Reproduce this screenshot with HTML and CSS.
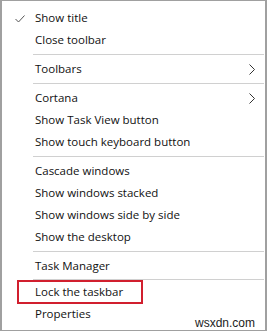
FILE: index.html
```html
<!DOCTYPE html>
<html>
<head>
<meta charset="utf-8">
<link rel="stylesheet" href="styles.css">
</head>
<body>
<div class="menu">
  <div class="item"><svg class="check" width="10" height="8" viewBox="0 0 10 8"><path d="M0.5 4 L3.5 7 L9.5 0.5" fill="none" stroke="#555" stroke-width="1"/></svg>Show title</div>
  <div class="item">Close toolbar</div>
  <div class="sep"></div>
  <div class="item">Toolbars<svg class="chev" width="6" height="11" viewBox="0 0 6 11"><path d="M0.5 0.5 L5.5 5.5 L0.5 10.5" fill="none" stroke="#333" stroke-width="1"/></svg></div>
  <div class="sep"></div>
  <div class="item">Cortana<svg class="chev" width="6" height="11" viewBox="0 0 6 11"><path d="M0.5 0.5 L5.5 5.5 L0.5 10.5" fill="none" stroke="#333" stroke-width="1"/></svg></div>
  <div class="item">Show Task View button</div>
  <div class="item">Show touch keyboard button</div>
  <div class="sep"></div>
  <div class="item">Cascade windows</div>
  <div class="item">Show windows stacked</div>
  <div class="item">Show windows side by side</div>
  <div class="item">Show the desktop</div>
  <div class="sep"></div>
  <div class="item">Task Manager</div>
  <div class="sep sep-tight"></div>
  <div class="item highlight">Lock the taskbar</div>
  <div class="item">Properties</div>
  <div class="watermark">wsxdn.com</div>
</div>
</body>
</html>
```
FILE: styles.css
```css
html, body {
  margin: 0;
  padding: 0;
  background: #fff;
}
.menu {
  position: relative;
  width: 267px;
  height: 331px;
  box-sizing: border-box;
  border: 1px solid #a0a0a0;
  border-right-width: 2px;
  border-left-width: 2px;
  padding-top: 6px;
  font-family: "Open Sans", "Noto Sans", sans-serif;
  font-size: 11.5px;
  color: #111;
  background: #fff;
}
.item {
  position: relative;
  height: 22px;
  line-height: 22px;
  padding-left: 33px;
  display: flex;
  align-items: center;
}
.check {
  position: absolute;
  left: 13px;
  top: 8px;
}
.chev {
  position: absolute;
  right: 10px;
  top: 6px;
}
.sep {
  height: 1px;
  background: #d0d0d0;
  margin: 3px 1px 3px 31px;
}
.sep-tight {
  margin: 2px 1px 1px 31px;
}
.highlight {
  box-sizing: border-box;
  border: 2px solid #d11f2e;
  width: 126px;
  height: 24px;
  margin: -1px 0 -1px 15px;
  padding-left: 16px;
}
.watermark {
  position: absolute;
  right: 10px;
  bottom: 0;
  font-family: "Liberation Sans", Arial, sans-serif;
  font-size: 12px;
  color: #222;
}
```
